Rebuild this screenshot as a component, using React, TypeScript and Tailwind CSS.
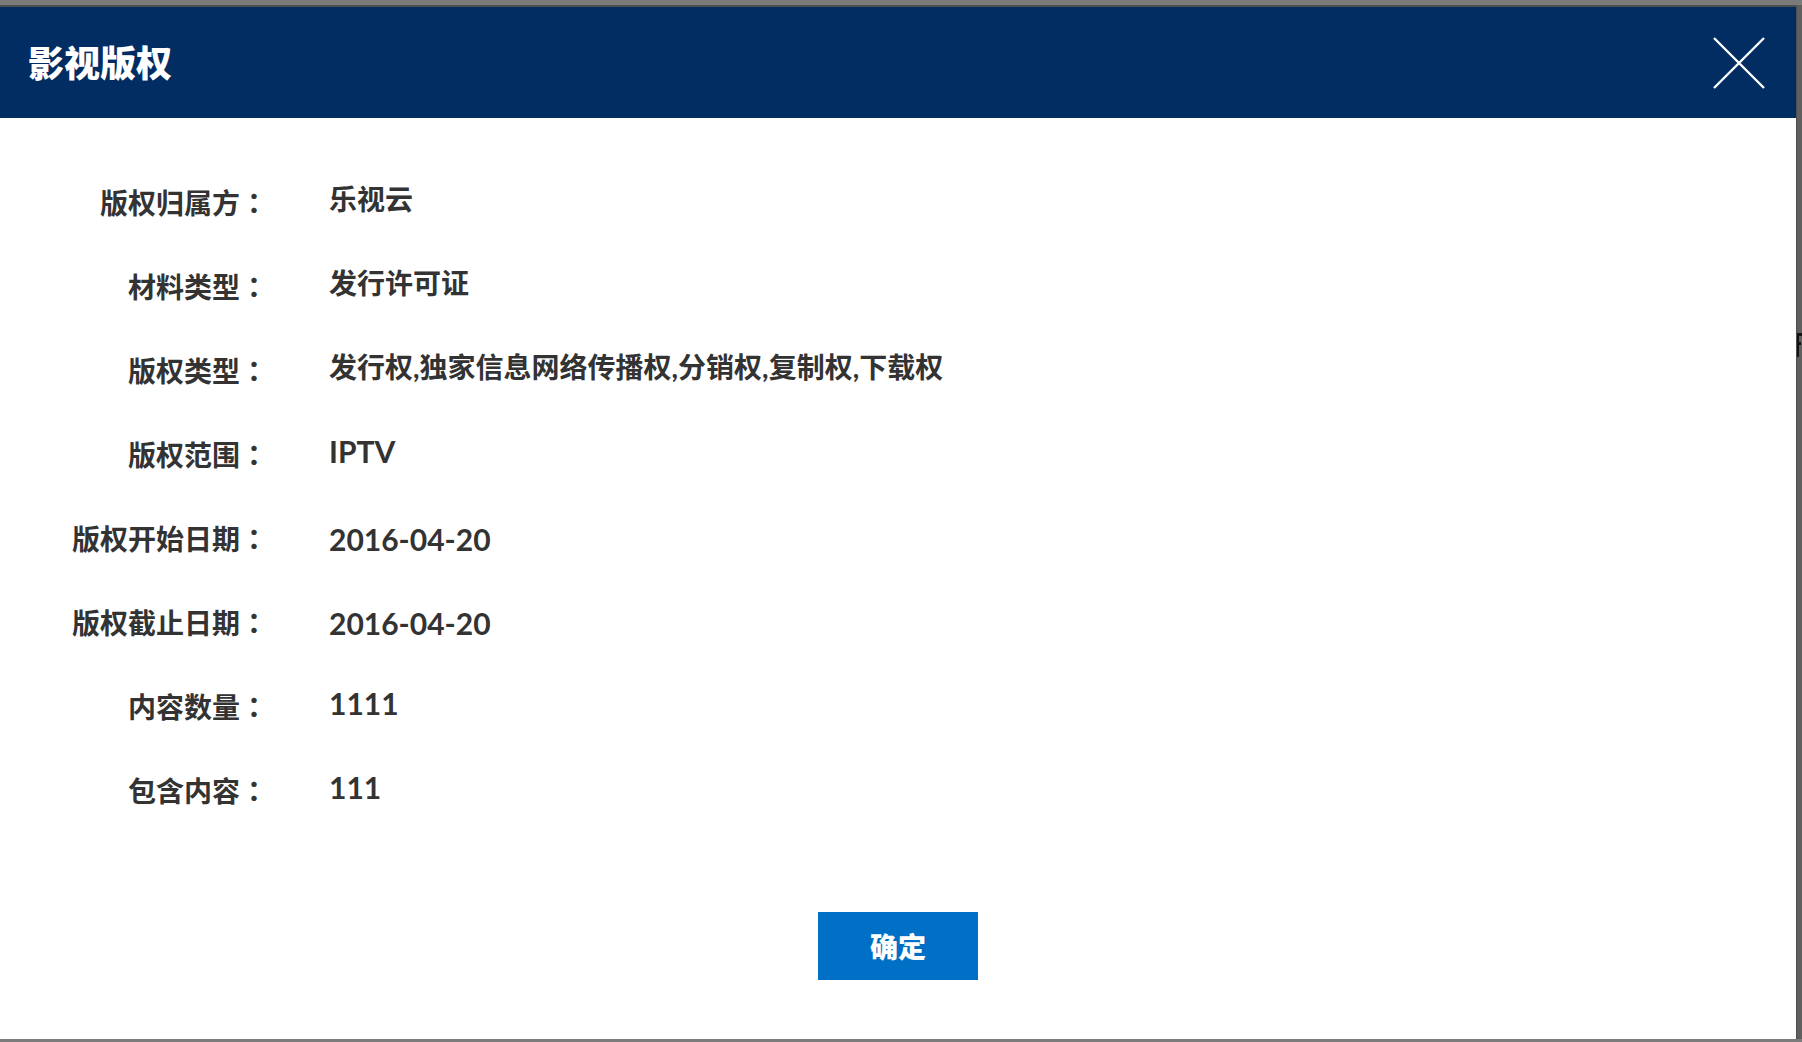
const rows = [
  { label: "版权归属方", value: "乐视云", latin: false, date: false },
  { label: "材料类型", value: "发行许可证", latin: false, date: false },
  { label: "版权类型", value: "发行权,独家信息网络传播权,分销权,复制权,下载权", latin: false, date: false },
  { label: "版权范围", value: "IPTV", latin: true, date: false },
  { label: "版权开始日期", value: "2016-04-20", latin: true, date: true },
  { label: "版权截止日期", value: "2016-04-20", latin: true, date: true },
  { label: "内容数量", value: "1111", latin: true, date: false },
  { label: "包含内容", value: "111", latin: true, date: false },
];

const cjk = { fontFamily: '"Noto Sans CJK SC", sans-serif' };
const colon = { fontFamily: '"Noto Sans CJK TC", sans-serif' };
const mixed = { fontFamily: '"Lato", "Noto Sans CJK SC", sans-serif' };

function App() {
  return (
    <div className="h-screen w-full overflow-hidden bg-[#7b7b7b] flex flex-col pt-[5px] pb-[3px]">
      <div className="flex flex-1 min-h-0">
        <div className="w-[1797px] flex flex-col bg-white border-t-2 border-r border-[#4e4e4e]">
          <div className="h-[111px] bg-[#022d62] flex items-center justify-between pl-[28px] pr-[31px]">
            <h1 className="text-white text-[36px] font-black leading-none pb-[4px]" style={cjk}>
              影视版权
            </h1>
            <button className="text-white">
              <svg width="52" height="52" viewBox="0 0 52 52" fill="none">
                <path d="M1 1L51 51M51 1L1 51" stroke="#ffffff" strokeWidth="2.4" />
              </svg>
            </button>
          </div>

          <div className="flex-1 flex flex-col pt-[42px]">
            {rows.map((r, i) => (
              <div key={i} className="h-[84px] flex items-center">
                <div
                  className="w-[268px] flex justify-end text-[28px] font-bold text-[#333] leading-none"
                  style={cjk}
                >
                  <span>{r.label}</span>
                  <span className="w-[28px] text-center" style={colon}>：</span>
                </div>
                <div
                  className={
                    "pl-[61px] font-bold text-[#333] leading-none " +
                    (r.latin ? "text-[30px] " : "text-[28px] ") +
                    (r.date ? "pt-[1px]" : "pb-[7px]")
                  }
                  style={mixed}
                >
                  {r.value}
                </div>
              </div>
            ))}

            <div className="flex justify-center pt-[80px]">
              <button
                className="w-[160px] h-[68px] bg-[#0070c6] text-white text-[28px] font-black leading-none"
                style={cjk}
              >
                确定
              </button>
            </div>
          </div>
        </div>
        <div className="flex-1 overflow-hidden pt-[328px] bg-[#5f5f5f]">
          <div className="flex">
            <div className="w-[3px] h-[24px] bg-[#141414]" />
            <div className="flex flex-col gap-[6px]">
              <div className="w-[3px] h-[3px] bg-[#141414]" />
              <div className="w-[2px] h-[3px] bg-[#141414]" />
            </div>
          </div>
        </div>
      </div>
    </div>
  );
}

export default App;
